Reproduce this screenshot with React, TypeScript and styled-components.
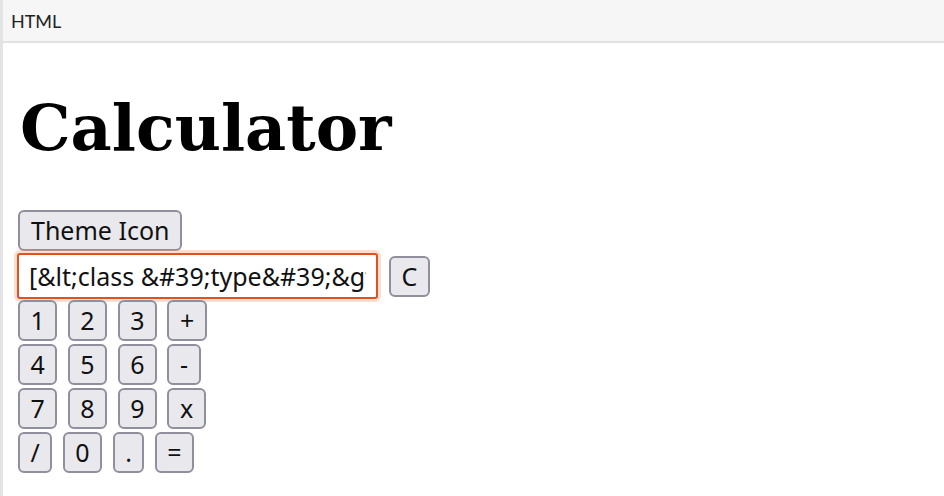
import React from 'react';
import styled, { createGlobalStyle } from 'styled-components';

const GlobalStyle = createGlobalStyle`
  html, body {
    margin: 0;
    padding: 0;
    background: #ffffff;
  }
  body {
    font-family: "Noto Sans", "Open Sans", sans-serif;
    color: #000;
  }
`;

const TopBar = styled.div`
  height: 41px;
  background: #f6f6f6;
  border-bottom: 2px solid #e2e2e2;
  border-left: 3px solid #e4e4e4;
  display: flex;
  align-items: center;
  padding-left: 8px;
  font-family: Lato, "Noto Sans", sans-serif;
  font-size: 18px;
  color: #222;
`;

const Page = styled.div`
  border-left: 3px solid #e4e4e4;
  min-height: 453px;
  padding-left: 15px;
  box-sizing: border-box;
  display: flex;
  flex-direction: column;
  align-items: flex-start;
`;

const Title = styled.h1`
  margin: 47px 0 45px 2px;
  font-family: "DejaVu Serif", serif;
  font-weight: bold;
  font-size: 63.6px;
  line-height: normal;
`;

const KeyButton = styled.button`
  height: 41px;
  padding: 0 10.5px;
  border: 2px solid #8f8f9d;
  border-radius: 6px;
  background: #e9e9ed;
  font-family: "Noto Sans", "Open Sans", sans-serif;
  font-size: 25px;
  color: #111;
  line-height: 1;
  cursor: pointer;
`;

const WideButton = styled(KeyButton)`
  padding: 0 11px;
`;

const InputRow = styled.div`
  display: flex;
  align-items: center;
  gap: 11px;
  margin: 2px 0 1px -1px;
`;

const Display = styled.input`
  width: 361px;
  height: 46px;
  box-sizing: border-box;
  padding: 0 10px;
  border: 2px solid #e0521f;
  border-radius: 3px;
  box-shadow: 0 0 0 3px rgba(244, 160, 120, 0.35);
  font-family: "Noto Sans", "Open Sans", sans-serif;
  font-size: 25px;
  color: #111;
  outline: none;
`;

const Keypad = styled.div`
  display: flex;
  flex-direction: column;
  gap: 3px;
`;

const KeyRow = styled.div`
  display: flex;
  gap: 10.5px;
`;

const rows = [
  ['1', '2', '3', '+'],
  ['4', '5', '6', '-'],
  ['7', '8', '9', 'x'],
  ['/', '0', '.', '='],
];

export default function App() {
  return (
    <>
      <GlobalStyle />
      <TopBar>HTML</TopBar>
      <Page>
        <Title>Calculator</Title>
        <WideButton>Theme Icon</WideButton>
        <InputRow>
          <Display readOnly value={"[&lt;class &#39;type&#39;&gt;]"} />
          <KeyButton>C</KeyButton>
        </InputRow>
        <Keypad>
          {rows.map((row, i) => (
            <KeyRow key={i}>
              {row.map((k) => (
                <KeyButton key={k}>{k}</KeyButton>
              ))}
            </KeyRow>
          ))}
        </Keypad>
      </Page>
    </>
  );
}
